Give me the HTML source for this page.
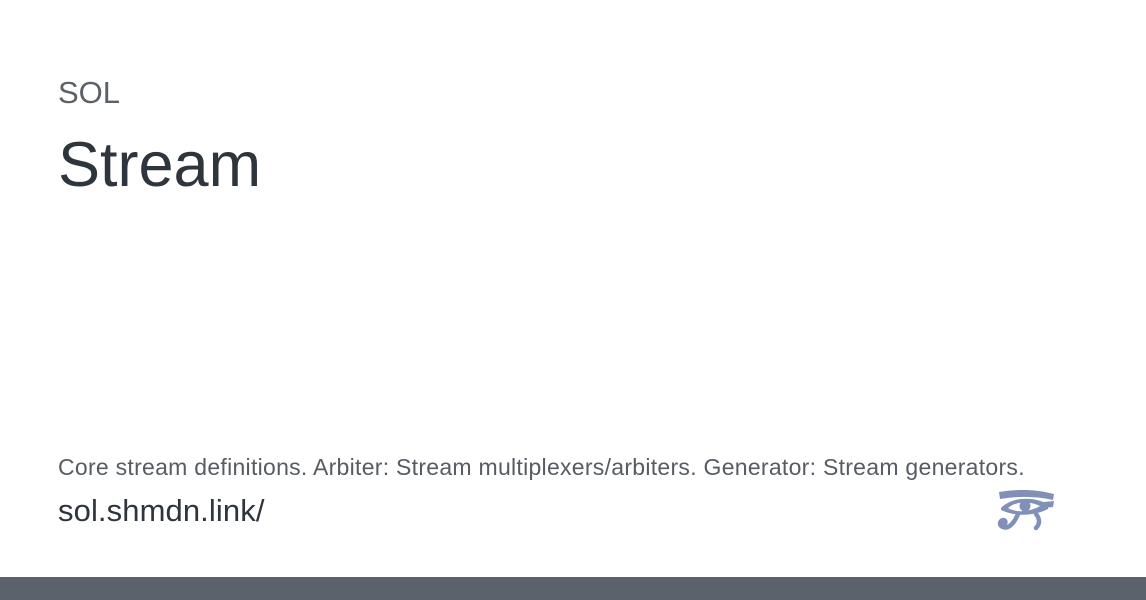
<!DOCTYPE html>
<html><head><meta charset="utf-8"><style>
html,body{margin:0;padding:0;}
body{width:1146px;height:600px;background:#fff;position:relative;overflow:hidden;font-family:"Liberation Sans",sans-serif;}
.t{position:absolute;left:58px;white-space:nowrap;line-height:1;}
#sol{top:77px;font-size:31px;color:#5c6168;}
#st{top:134px;font-size:63px;color:#2f353d;}
#d{top:456px;font-size:23px;color:#575c63;letter-spacing:0.28px;}
#u{top:495px;font-size:31px;color:#2f353d;letter-spacing:0.1px;}
#bar{position:absolute;left:0;top:577px;width:1146px;height:23px;background:#5b626c;}
svg{position:absolute;left:996px;top:489px;}
</style></head><body>
<div class="t" id="sol">SOL</div>
<div class="t" id="st">Stream</div>
<div class="t" id="d">Core stream definitions. Arbiter: Stream multiplexers/arbiters. Generator: Stream generators.</div>
<div class="t" id="u">sol.shmdn.link/</div>
<svg width="60" height="44" viewBox="0 0 60 44">
<g fill="#8090b6">
<path d="M3 3 C20 0 40 0 58 5 L57 11 C40 7 22 7 4 10 Z"/>
<path d="M5 19 C16 8 36 7 52 15 L52 20 C38 27 20 28 5 21 Z"/>
<path d="M48 13 L58 12 L57 18 L48 19 Z"/>
</g>
<path d="M12 19 C20 12 34 12 44 17 C34 23 20 24 12 19 Z" fill="#fff"/>
<circle cx="29" cy="17" r="5.5" fill="#8090b6"/>
<g fill="none" stroke="#8090b6" stroke-width="4.5" stroke-linecap="round">
<path d="M22 25 C18 35 12 40 7 38 C3 37 3 32 7 31 C10 31 10 34 8 35"/>
<path d="M40 25 C44 30 44 35 40 39"/>
</g>
</svg>
<div id="bar"></div>
</body></html>
